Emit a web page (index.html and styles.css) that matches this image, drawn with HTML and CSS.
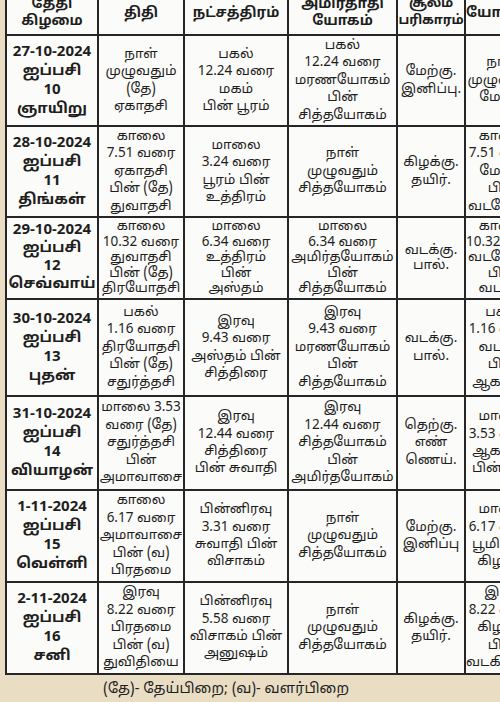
FILE: index.html
```html
<!DOCTYPE html>
<html lang="ta">
<head>
<meta charset="utf-8">
<title>பஞ்சாங்கம்</title>
<link rel="stylesheet" href="styles.css">
</head>
<body>
<div class="page">
  <div class="frame">
    <table class="cal">
      <colgroup>
        <col class="c1"><col class="c2"><col class="c3"><col class="c4"><col class="c5"><col class="c6">
      </colgroup>
      <thead>
        <tr>
          <th>தேதி<br>கிழமை</th>
          <th>திதி</th>
          <th>நட்சத்திரம்</th>
          <th>அமிர்தாதி<br>யோகம்</th>
          <th class="narrow">சூலம்<br>பரிகாரம்</th>
          <th>யோகினி</th>
        </tr>
      </thead>
      <tbody>
        <tr>
          <td class="date">27-10-2024<br>ஐப்பசி<br>10<br>ஞாயிறு</td>
          <td>நாள்<br>முழுவதும்<br>(தே)<br>ஏகாதசி</td>
          <td>பகல்<br>12.24 வரை<br>மகம்<br>பின் பூரம்</td>
          <td>பகல்<br>12.24 வரை<br>மரணயோகம்<br>பின்<br>சித்தயோகம்</td>
          <td>மேற்கு.<br>இனிப்பு.</td>
          <td>நாள்<br>முழுவதும்<br>மேற்கு</td>
        </tr>
        <tr>
          <td class="date">28-10-2024<br>ஐப்பசி<br>11<br>திங்கள்</td>
          <td>காலை<br>7.51 வரை<br>ஏகாதசி<br>பின் (தே)<br>துவாதசி</td>
          <td>மாலை<br>3.24 வரை<br>பூரம் பின்<br>உத்திரம்</td>
          <td>நாள்<br>முழுவதும்<br>சித்தயோகம்</td>
          <td>கிழக்கு.<br>தயிர்.</td>
          <td>காலை<br>7.51 வரை<br>மேற்கு<br>பின்<br>வடமேற்கு</td>
        </tr>
        <tr class="tight">
          <td class="date">29-10-2024<br>ஐப்பசி<br>12<br>செவ்வாய்</td>
          <td>காலை<br>10.32 வரை<br>துவாதசி<br>பின் (தே)<br>திரயோதசி</td>
          <td>மாலை<br>6.34 வரை<br>உத்திரம்<br>பின்<br>அஸ்தம்</td>
          <td>மாலை<br>6.34 வரை<br>அமிர்தயோகம்<br>பின்<br>சித்தயோகம்</td>
          <td>வடக்கு.<br>பால்.</td>
          <td>காலை<br>10.32 வரை<br>வடமேற்கு<br>பின்<br>வடக்கு</td>
        </tr>
        <tr>
          <td class="date">30-10-2024<br>ஐப்பசி<br>13<br>புதன்</td>
          <td>பகல்<br>1.16 வரை<br>திரயோதசி<br>பின் (தே)<br>சதுர்த்தசி</td>
          <td>இரவு<br>9.43 வரை<br>அஸ்தம் பின்<br>சித்திரை</td>
          <td>இரவு<br>9.43 வரை<br>மரணயோகம்<br>பின்<br>சித்தயோகம்</td>
          <td>வடக்கு.<br>பால்.</td>
          <td>பகல்<br>1.16 வரை<br>வடக்கு<br>பின்<br>ஆகாயம்</td>
        </tr>
        <tr>
          <td class="date">31-10-2024<br>ஐப்பசி<br>14<br>வியாழன்</td>
          <td>மாலை 3.53<br>வரை (தே)<br>சதுர்த்தசி<br>பின்<br>அமாவாசை</td>
          <td>இரவு<br>12.44 வரை<br>சித்திரை<br>பின் சுவாதி</td>
          <td>இரவு<br>12.44 வரை<br>சித்தயோகம்<br>பின்<br>அமிர்தயோகம்</td>
          <td>தெற்கு.<br>எண்<br>ணெய்.</td>
          <td>மாலை<br>3.53 வரை<br>ஆகாயம்<br>பின் பூமி</td>
        </tr>
        <tr>
          <td class="date">1-11-2024<br>ஐப்பசி<br>15<br>வெள்ளி</td>
          <td>காலை<br>6.17 வரை<br>அமாவாசை<br>பின் (வ)<br>பிரதமை</td>
          <td>பின்னிரவு<br>3.31 வரை<br>சுவாதி பின்<br>விசாகம்</td>
          <td>நாள்<br>முழுவதும்<br>சித்தயோகம்</td>
          <td>மேற்கு.<br>இனிப்பு</td>
          <td>மாலை<br>6.17 வரை<br>பூமி பின்<br>கிழக்கு</td>
        </tr>
        <tr>
          <td class="date">2-11-2024<br>ஐப்பசி<br>16<br>சனி</td>
          <td>இரவு<br>8.22 வரை<br>பிரதமை<br>பின் (வ)<br>துவிதியை</td>
          <td>பின்னிரவு<br>5.58 வரை<br>விசாகம் பின்<br>அனுஷம்</td>
          <td>நாள்<br>முழுவதும்<br>சித்தயோகம்</td>
          <td>கிழக்கு.<br>தயிர்.</td>
          <td>இரவு<br>8.22 வரை<br>கிழக்கு<br>பின்<br>வடகிழக்கு</td>
        </tr>
      </tbody>
    </table>
  </div>
  <p class="note">(தே)- தேய்பிறை; (வ)- வளர்பிறை</p>
</div>
</body>
</html>
```
FILE: styles.css
```css
html, body {
  margin: 0;
  padding: 0;
}
body {
  width: 500px;
  height: 702px;
  overflow: hidden;
  background: #e9ddc4;
  font-family: "Noto Sans Tamil", "Lohit Tamil", "Noto Sans", "Liberation Sans", sans-serif;
  color: #1e1e1e;
}
.page {
  width: 500px;
  height: 702px;
  overflow: hidden;
  display: flex;
  flex-direction: column;
}
.frame {
  margin-top: -10px;
  padding-left: 5px;
  overflow: hidden;
  flex: none;
}
.cal {
  border-collapse: collapse;
  table-layout: fixed;
  width: 535px;
  background: #fbfbf9;
}
.c1 { width: 92px; }
.c2 { width: 86px; }
.c3 { width: 104px; }
.c4 { width: 109px; }
.c5 { width: 68px; }
.c6 { width: 76px; }
.cal th, .cal td {
  border: 2px solid #262626;
  text-align: center;
  vertical-align: middle;
  padding: 0;
  font-size: 13.5px;
  line-height: 17.4px;
  font-weight: 400;
  white-space: nowrap;
  overflow: hidden;
}
.cal th {
  height: 42px;
  font-weight: 700;
  font-size: 14px;
  line-height: 17px;
}
.cal th.narrow {
  font-size: 13px;
  letter-spacing: -0.2px;
}
.cal td.date {
  font-weight: 700;
  font-size: 15px;
  line-height: 19px;
}
.cal tbody tr:nth-child(1) { height: 91px; }
.cal tbody tr:nth-child(2) { height: 91px; }
.cal tbody tr:nth-child(3) { height: 82px; }
.cal tbody tr:nth-child(4) { height: 97px; }
.cal tbody tr:nth-child(5) { height: 94px; }
.cal tbody tr:nth-child(6) { height: 92px; }
.cal tbody tr:nth-child(7) { height: 92px; }
.cal tr.tight td {
  line-height: 15.4px;
}
.cal tr.tight td.date {
  line-height: 18px;
}
.note {
  margin: 5px 0 0 103px;
  font-size: 14.5px;
  line-height: 18px;
}
```
